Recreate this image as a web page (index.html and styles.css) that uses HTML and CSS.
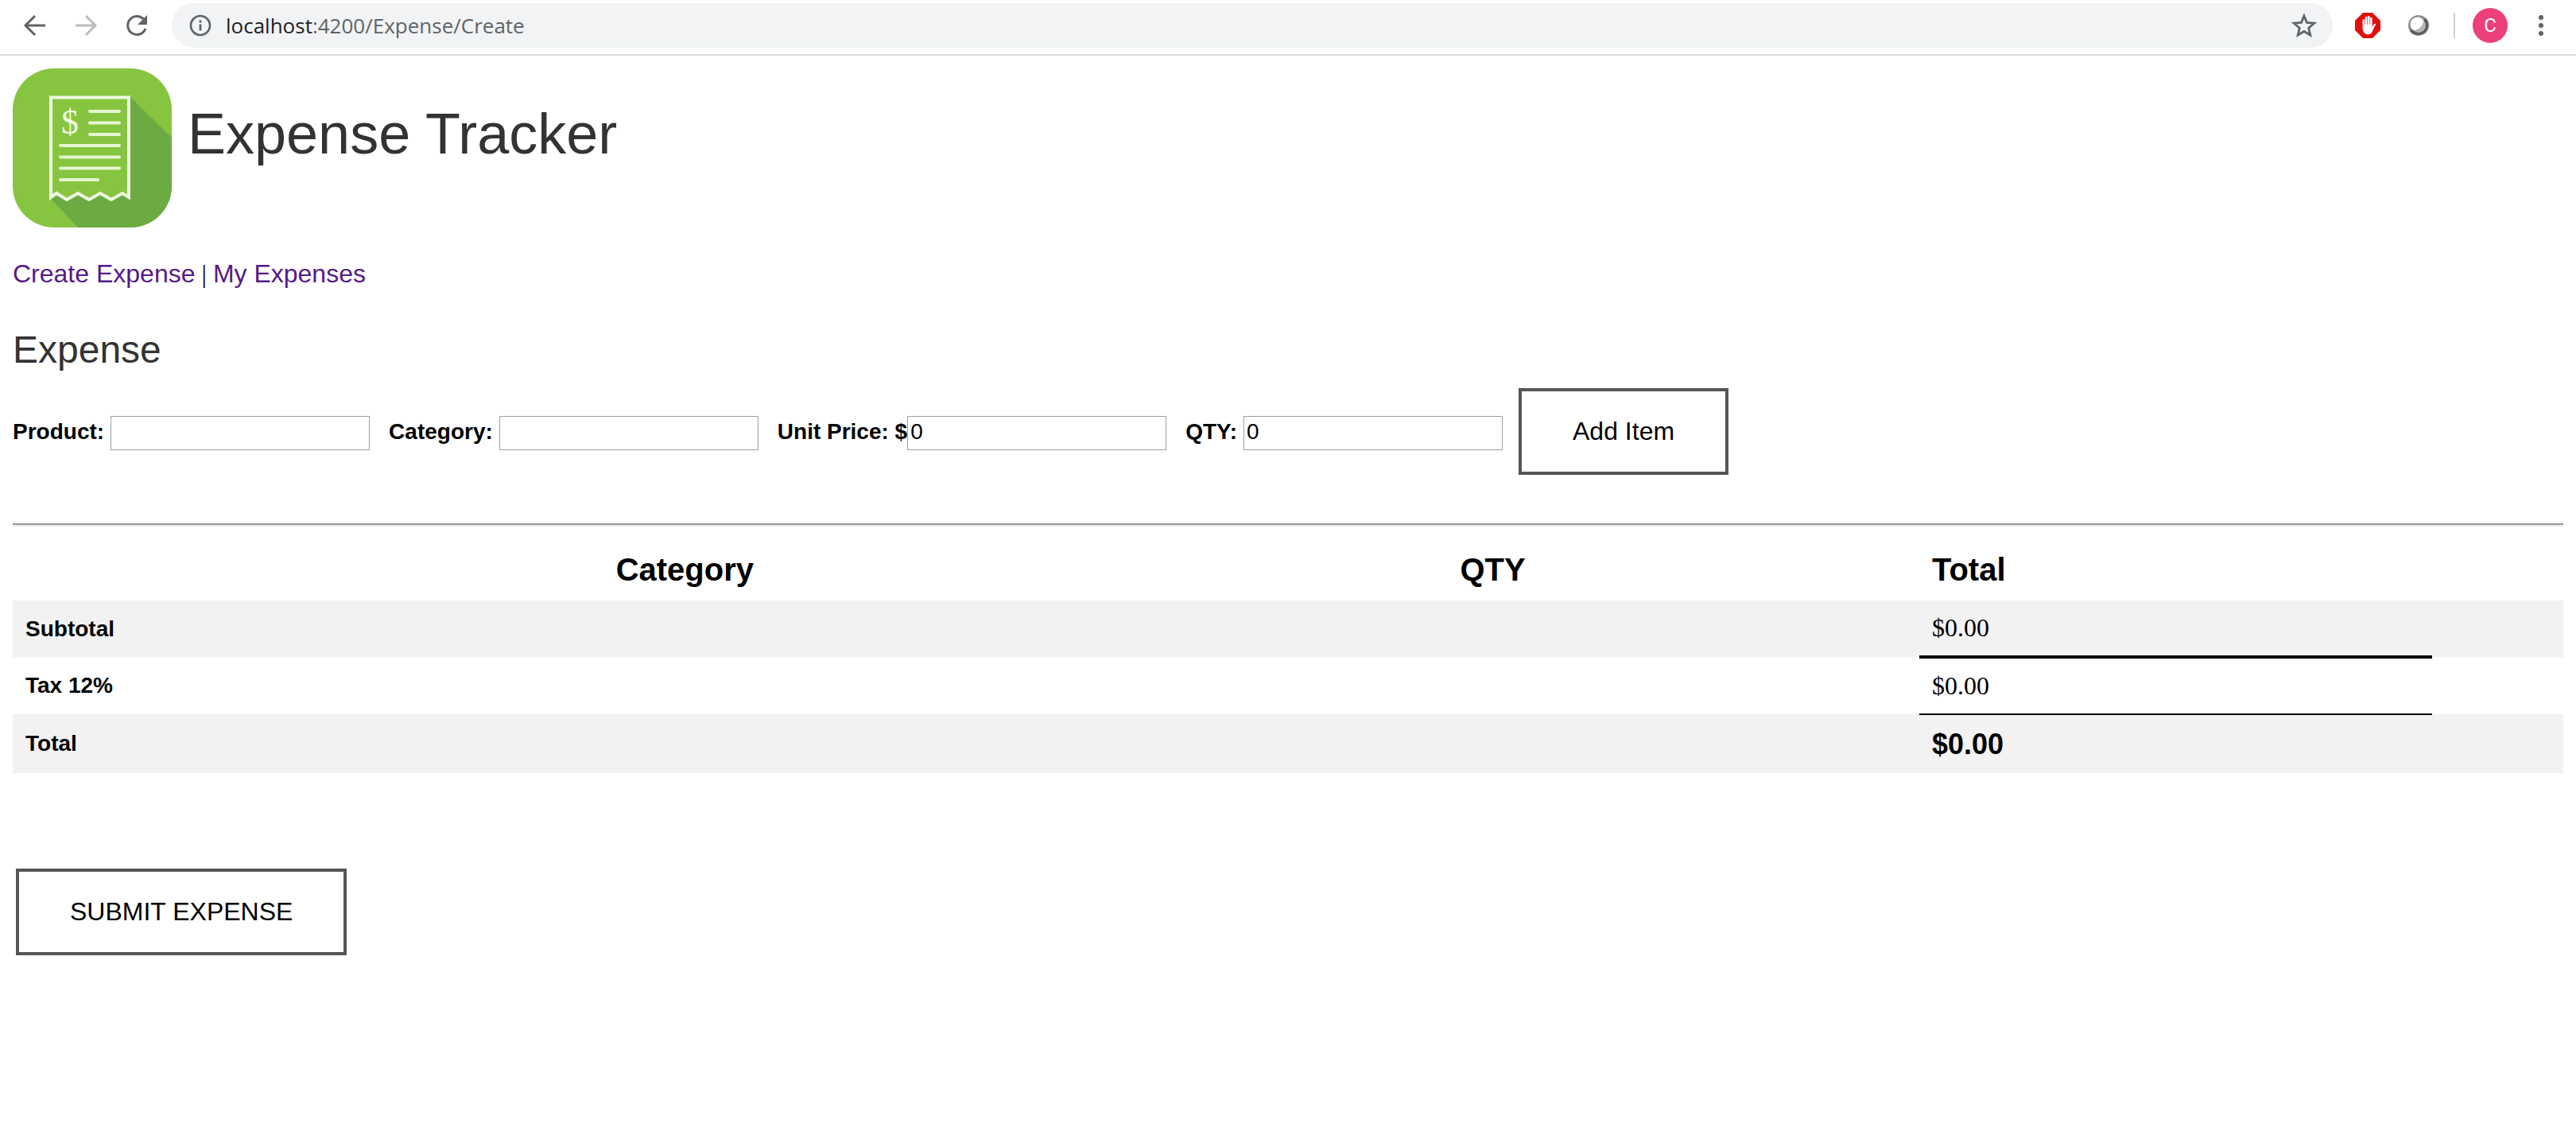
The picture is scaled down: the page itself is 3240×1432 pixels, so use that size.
FILE: index.html
```html
<!DOCTYPE html>
<html lang="en">
<head>
<meta charset="utf-8">
<title>Expense Tracker</title>
<link rel="stylesheet" href="styles.css">
</head>
<body>
<div class="toolbar">
  <button class="tool" type="button" aria-label="Back"><svg class="icon" viewBox="0 0 32 32"><path d="M29 16H5M16 4 4 16l12 12" fill="none" stroke="#5f6368" stroke-width="3"/></svg></button>
  <button class="tool" type="button" aria-label="Forward"><svg class="icon" viewBox="0 0 32 32"><path d="M3 16h24M16 4l12 12-12 12" fill="none" stroke="#babcbe" stroke-width="3"/></svg></button>
  <button class="tool" type="button" aria-label="Reload"><svg class="icon" viewBox="0 0 32 32"><path d="M27 20A11.5 11.5 0 1 1 24.5 8" fill="none" stroke="#5f6368" stroke-width="3"/><path d="M29 3v12H17z" fill="#5f6368"/></svg></button>
  <div class="address">
    <svg class="icon" viewBox="0 0 32 32"><circle cx="16" cy="16" r="12" fill="none" stroke="#5f6368" stroke-width="2.6"/><path d="M16 14.500v8M16 9.500v3" stroke="#5f6368" stroke-width="2.8"/></svg>
    <div class="url" role="textbox" aria-label="Address"><span class="host">localhost</span>:4200/Expense/Create</div>
    <button class="star" type="button" aria-label="Bookmark"><svg class="icon" viewBox="0 0 32 32"><path d="M16 4l3.500 8.400 9.200.8-7 6 2.100 9L16 23.500l-7.800 4.700 2.100-9-7-6 9.200-.8z" fill="none" stroke="#5f6368" stroke-width="2.800"/></svg></button>
  </div>
  <div class="extensions">
    <button class="tool" type="button" aria-label="Ad blocker"><svg class="icon" viewBox="0 0 32 32"><path d="M10 0h12l10 10v12L22 32H10L0 22V10z" fill="#e2100c"/><path d="M9.500 18V9.500a1.300 1.300 0 0 1 2.600 0V15h.6V6a1.300 1.300 0 0 1 2.600 0v9h.6V5a1.300 1.300 0 0 1 2.600 0v10h.6V7a1.300 1.300 0 0 1 2.600 0v11l2-3.500c.9-1.300 2.600-.8 2.200.6L22 23c-1 3-3 4.300-5.500 4.300-4.500 0-7-3-7-9.300z" fill="#fff"/></svg></button>
    <button class="tool" type="button" aria-label="Extension"><svg class="icon" viewBox="0 0 32 32"><circle cx="16" cy="16" r="13" fill="#8d8d8d"/><path d="M25.500 7A13 13 0 1 1 5 23z" fill="#5c5c5c"/><circle cx="16" cy="16" r="9" fill="#b4b4b4"/><path d="M22 9.500A9 9 0 1 0 9.500 22C16 22 22 17 22 9.500z" fill="#fff"/></svg></button>
    <span class="divider"></span>
    <button class="avatar" type="button">C</button>
    <button class="tool" type="button" aria-label="Menu"><svg class="icon" viewBox="0 0 32 32"><g fill="#5f6368"><circle cx="16" cy="6" r="3"/><circle cx="16" cy="16" r="3"/><circle cx="16" cy="26" r="3"/></g></svg></button>
  </div>
</div>

<main class="page">
  <header class="brand">
    <svg class="logo" viewBox="0 0 200 200" role="img" aria-label="Expense Tracker logo">
      <defs><clipPath id="tile"><rect width="200" height="200" rx="52"/></clipPath></defs>
      <g clip-path="url(#tile)">
        <path d="M0 0h200v200H0z" fill="#87c540"/>
        <path d="M148 36l52 51v113H82L48 164z" fill="#6cab42"/>
        <path d="M48 36.500h98V162l-8-5-14 8-14-8-14 8-14-8-14 8-13-8-7 5z" fill="#87c540" stroke="#effbe0" stroke-width="4"/>
        <path d="M97 54h37M97 68.500h37M97 83h37M60 97h74M60 111.500h74M60 125.500h74M60 140h47" stroke="#e6f6d0" stroke-width="4" stroke-linecap="round"/>
        <text class="logo-sign" x="72" y="82" text-anchor="middle">$</text>
      </g>
    </svg>
    <h1 class="title">Expense Tracker</h1>
  </header>

  <nav class="links"><a href="#create">Create Expense</a> | <a href="#list">My Expenses</a></nav>

  <h2 class="heading">Expense</h2>

  <form class="item-form">
    <div class="field"><label for="product">Product:</label><input id="product" type="text"></div>
    <div class="field"><label for="category">Category:</label><input id="category" type="text"></div>
    <div class="field field-price"><label for="price">Unit Price: $</label><input id="price" type="text" value="0"></div>
    <div class="field"><label for="qty">QTY:</label><input id="qty" type="text" value="0"></div>
    <button class="button add" type="button">Add Item</button>
  </form>

  <hr class="rule">

  <table class="items">
    <colgroup><col class="col-name"><col class="col-category"><col class="col-qty"><col class="col-total"><col></colgroup>
    <thead>
      <tr><th></th><th>Category</th><th>QTY</th><th>Total</th><th></th></tr>
    </thead>
    <tbody>
      <tr><th scope="row">Subtotal</th><td></td><td></td><td class="subtotal">$0.00</td><td></td></tr>
      <tr><th scope="row">Tax 12%</th><td></td><td></td><td class="tax">$0.00</td><td></td></tr>
      <tr><th scope="row">Total</th><td></td><td></td><td class="grand">$0.00</td><td></td></tr>
    </tbody>
  </table>

  <button class="button submit" type="button">SUBMIT EXPENSE</button>
</main>
</body>
</html>
```

FILE: styles.css
```css
* { box-sizing: border-box; }

body {
  margin: 0;
  background: #fff;
  color: #000;
  font-family: "Liberation Sans", Arial, sans-serif;
}

/* Browser toolbar */
.toolbar {
  display: flex;
  align-items: center;
  height: 70px;
  padding: 0 28px 4px;
  border-bottom: 2px solid #dadce0;
}

.tool, .star {
  display: flex;
  padding: 0;
  border: 0;
  background: none;
}

.toolbar > .tool { margin-right: 32px; }

.icon {
  display: block;
  flex: none;
  width: 32px;
  height: 32px;
}

.address {
  display: flex;
  flex: 1;
  align-items: center;
  gap: 16px;
  height: 56px;
  margin-left: -4px;
  padding: 0 20px;
  border-radius: 28px;
  background: #f1f3f4;
}

.url {
  flex: 1;
  color: #5f6368;
  font: 26px/36px "Open Sans", "Noto Sans", sans-serif;
}

.host { color: #202124; }

.extensions {
  display: flex;
  align-items: center;
  padding-left: 28px;
}

.extensions .tool + .tool { margin-left: 32px; }

.divider {
  width: 2px;
  height: 32px;
  margin: 0 22px 0 28px;
  background: #cfd1d4;
}

.avatar {
  width: 44px;
  height: 44px;
  margin-right: 26px;
  padding: 0;
  border: 0;
  border-radius: 50%;
  background: #ec407a;
  color: #fff;
  font: 24px/44px Roboto, sans-serif;
}

/* Page */
.page { padding: 16px; }

.brand {
  display: flex;
  gap: 20px;
}

.logo {
  width: 200px;
  height: 200px;
}

.logo-sign {
  fill: #effbe0;
  font: 44px "Liberation Serif", serif;
}

.title {
  margin: 42px 0 0;
  color: #333;
  font-size: 72px;
  font-weight: 400;
  line-height: 80px;
}

.links {
  margin-top: 40px;
  font: 32px/36px "Liberation Serif", "Times New Roman", serif;
}

.links a {
  color: #551a8b;
  font-family: "Liberation Sans", Arial, sans-serif;
  text-decoration: none;
}

.heading {
  margin: 52px 0 22px;
  color: #333;
  font-size: 48px;
  font-weight: 400;
  line-height: 52px;
}

.item-form {
  display: flex;
  align-items: center;
  gap: 24px;
}

.field {
  display: flex;
  align-items: center;
  gap: 8px;
  font-size: 28px;
  line-height: 32px;
}

.field-price { gap: 0; }

.field label { font-weight: 700; }

.field input {
  width: 326px;
  height: 43px;
  margin: 3px 0 0;
  padding: 0 3px 3px;
  border: 1px solid #a0a0a0;
  background: #fff;
  color: #000;
  font: 28px "Liberation Sans", Arial, sans-serif;
}

.button {
  padding: 32px 64px;
  border: 4px solid #555;
  background: #fff;
  color: #000;
  font: 32px/37px "Liberation Sans", Arial, sans-serif;
}

.add { margin-left: -4px; }

.rule {
  height: 4px;
  margin: 61px 0 15px;
  border: 0;
  border-top: 2px solid #9a9a9a;
  border-bottom: 2px solid #eee;
}

.items {
  width: 100%;
  table-layout: fixed;
  border-collapse: collapse;
  text-align: left;
}

.col-name { width: 23.15%; }
.col-category { width: 33.1%; }
.col-qty { width: 18.5%; }
.col-total { width: 20.1%; }

.items th, .items td { padding: 16px; }

.items thead th {
  font-size: 40px;
  line-height: 46px;
}

.items tbody tr:nth-child(odd) { background: #f2f2f2; }

.items tbody th {
  font-size: 28px;
  line-height: 32px;
}

.items td {
  font: 32px/37px "Liberation Serif", "Times New Roman", serif;
}

.items .subtotal { border-bottom: 4px solid #000; }
.items .tax { border-bottom: 2px solid #000; }

.items .grand {
  font: 700 36px/41px "Liberation Sans", Arial, sans-serif;
}

.submit { margin: 120px 4px 0; }
```
